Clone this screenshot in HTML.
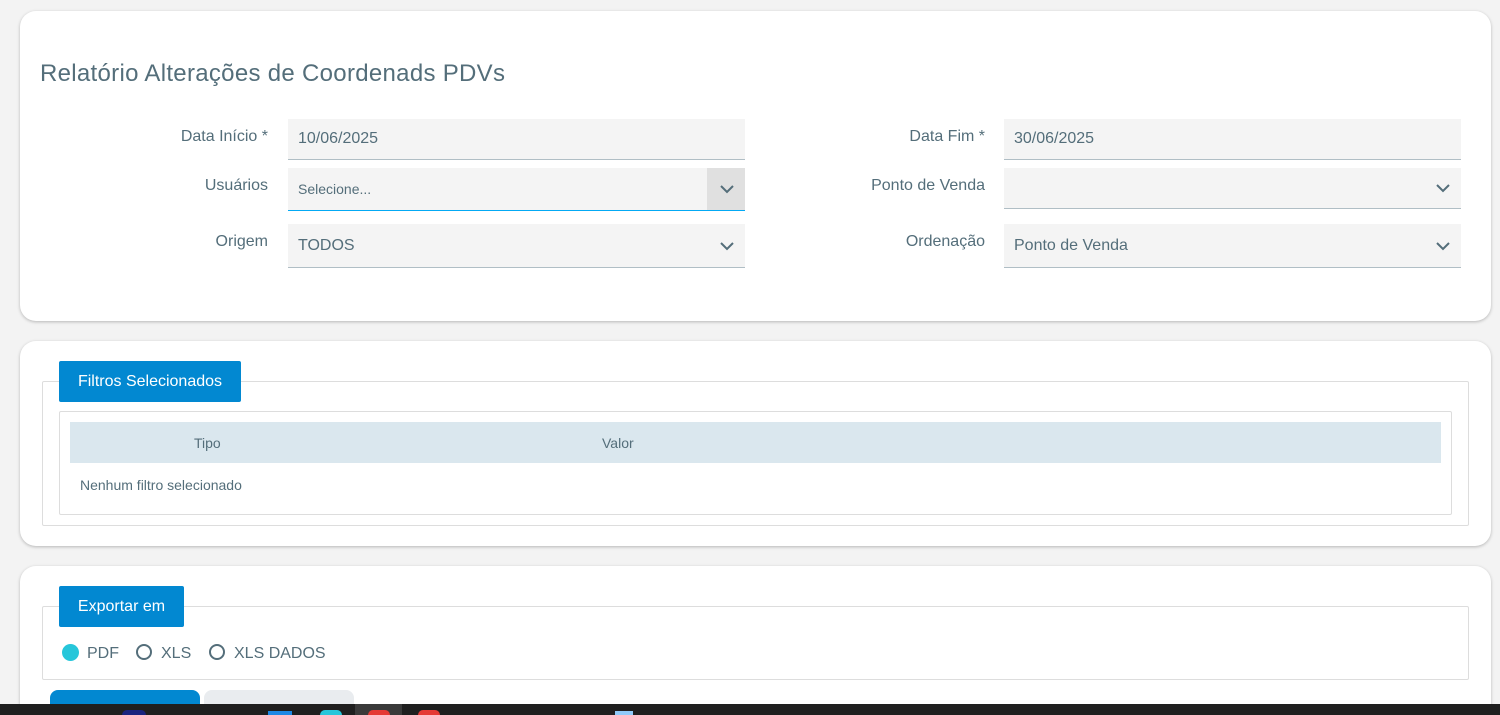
<!DOCTYPE html>
<html style="width:1500px;height:715px;overflow:hidden"><head><meta charset="utf-8"><style>
*{box-sizing:border-box;margin:0;padding:0}
body{width:1500px;height:715px;background:#f3f3f3;font-family:"Liberation Sans",sans-serif;color:#546e7a;position:relative;overflow:hidden}
.card{position:absolute;left:20px;width:1471px;background:#fff;border-radius:16px;box-shadow:0 1px 3px rgba(0,0,0,.25)}
.abs{position:absolute}
.lbl{position:absolute;font-size:16px;text-align:right;width:200px}
.inp{position:absolute;width:457px;background:#f4f4f4;border-bottom:1px solid #b0bec5;font-size:16px;padding-left:10px;display:flex;align-items:center}
.chev{position:absolute;right:11px;top:50%;margin-top:-5px}
.box{position:absolute;border:1px solid #ddd;border-radius:2px}
.leg{position:absolute;background:#0288d1;color:#fff;font-size:16px;display:flex;align-items:center;justify-content:center;border-radius:2px}
.radio{position:absolute;width:16px;height:16px;border-radius:50%;border:2px solid #546e7a}
</style></head><body>
<div class="card" style="top:11px;height:310px"></div>
<div class="abs" style="left:40px;top:60px;font-size:24px;color:#546e7a;letter-spacing:0.3px">Relatório Alterações de Coordenads PDVs</div>

<div class="lbl" style="left:68px;top:128px">Data Início *</div>
<div class="inp" style="left:288px;top:119px;height:41px">10/06/2025</div>
<div class="lbl" style="left:68px;top:177px">Usuários</div>
<div class="inp" style="left:288px;top:168px;height:43px;font-size:14px;border-bottom:1px solid #03a9f4">Selecione...<div class="abs" style="right:0;top:0;width:38px;height:42px;background:#e0e0e0"></div><svg class="chev" width="14" height="10" viewBox="0 0 14 10"><path d="M1 2l6 6 6-6" fill="none" stroke="#546e7a" stroke-width="2"/></svg></div>
<div class="lbl" style="left:68px;top:233px">Origem</div>
<div class="inp" style="left:288px;top:224px;height:44px">TODOS<svg class="chev" width="14" height="10" viewBox="0 0 14 10"><path d="M1 2l6 6 6-6" fill="none" stroke="#546e7a" stroke-width="2"/></svg></div>

<div class="lbl" style="left:785px;top:128px">Data Fim *</div>
<div class="inp" style="left:1004px;top:119px;height:41px">30/06/2025</div>
<div class="lbl" style="left:785px;top:177px">Ponto de Venda</div>
<div class="inp" style="left:1004px;top:168px;height:41px"><svg class="chev" width="14" height="10" viewBox="0 0 14 10"><path d="M1 2l6 6 6-6" fill="none" stroke="#546e7a" stroke-width="2"/></svg></div>
<div class="lbl" style="left:785px;top:233px">Ordenação</div>
<div class="inp" style="left:1004px;top:224px;height:44px">Ponto de Venda<svg class="chev" width="14" height="10" viewBox="0 0 14 10"><path d="M1 2l6 6 6-6" fill="none" stroke="#546e7a" stroke-width="2"/></svg></div>

<div class="card" style="top:341px;height:205px"></div>
<div class="box" style="left:42px;top:381px;width:1427px;height:145px"></div>
<div class="leg" style="left:59px;top:361px;width:182px;height:41px">Filtros Selecionados</div>
<div class="box" style="left:59px;top:411px;width:1393px;height:104px"></div>
<div class="abs" style="left:70px;top:422px;width:1371px;height:41px;background:#dae7ee"></div>
<div class="abs" style="left:194px;top:435px;font-size:14px">Tipo</div>
<div class="abs" style="left:602px;top:435px;font-size:14px">Valor</div>
<div class="abs" style="left:80px;top:477px;font-size:14px">Nenhum filtro selecionado</div>

<div class="card" style="top:566px;height:160px"></div>
<div class="box" style="left:42px;top:606px;width:1427px;height:74px"></div>
<div class="leg" style="left:59px;top:586px;width:125px;height:41px">Exportar em</div>
<div class="abs" style="left:62px;top:644px;width:17px;height:17px;border-radius:50%;background:#26c6da"></div>
<div class="abs" style="left:87px;top:645px;font-size:16px">PDF</div>
<div class="radio" style="left:136px;top:644px"></div>
<div class="abs" style="left:161px;top:645px;font-size:16px">XLS</div>
<div class="radio" style="left:209px;top:644px"></div>
<div class="abs" style="left:234px;top:645px;font-size:16px">XLS DADOS</div>
<div class="abs" style="left:50px;top:690px;width:150px;height:14px;background:#0288d1;border-radius:8px 8px 0 0"></div>
<div class="abs" style="left:204px;top:690px;width:150px;height:14px;background:#e9ecef;border-radius:8px 8px 0 0"></div>

<div class="abs" style="left:0;top:704px;width:1500px;height:11px;background:#1f1f1f"></div>
<div class="abs" style="left:355px;top:704px;width:47px;height:11px;background:#3a3a3a"></div>
<div class="abs" style="left:122px;top:710px;width:24px;height:5px;background:#1a237e;border-radius:12px 12px 0 0"></div>
<div class="abs" style="left:320px;top:710px;width:22px;height:5px;background:#26c6da;border-radius:12px 12px 0 0"></div>
<div class="abs" style="left:368px;top:710px;width:22px;height:5px;background:#e53935;border-radius:12px 12px 0 0"></div>
<div class="abs" style="left:418px;top:710px;width:22px;height:5px;background:#e53935;border-radius:12px 12px 0 0"></div>
<div class="abs" style="left:268px;top:711px;width:24px;height:4px;background:#1e88e5"></div>
<div class="abs" style="left:615px;top:711px;width:18px;height:4px;background:#90caf9"></div>
</body></html>
